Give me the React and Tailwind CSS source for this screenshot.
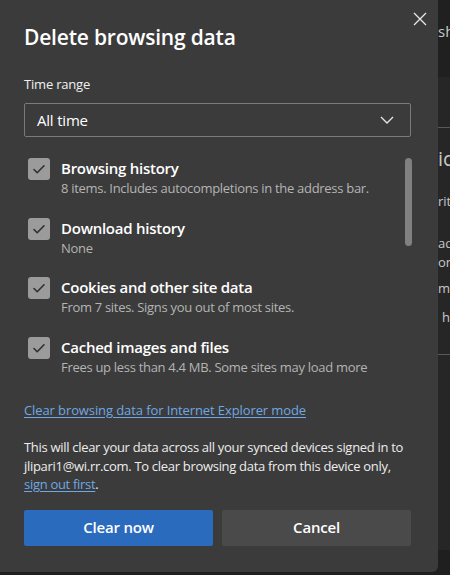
import React from "react";

const items = [
  { title: "Browsing history", desc: "8 items. Includes autocompletions in the address bar." },
  { title: "Download history", desc: "None" },
  { title: "Cookies and other site data", desc: "From 7 sites. Signs you out of most sites." },
  { title: "Cached images and files", desc: "Frees up less than 4.4 MB. Some sites may load more" },
];

const Check = () => (
  <div className="w-[22px] h-[22px] shrink-0 rounded-[3px] bg-[#9b9b9b] flex items-center justify-center">
    <svg width="14" height="14" viewBox="0 0 14 14" fill="none">
      <path d="M2 7.5l3.2 3.2L12 3.8" stroke="#2f2f2f" strokeWidth="1.6" strokeLinecap="round" strokeLinejoin="round" />
    </svg>
  </div>
);

export default function App() {
  return (
    <div className="w-[450px] h-[575px] bg-[#1f1f1f] flex overflow-hidden" style={{ fontFamily: '"Open Sans", "Noto Sans", sans-serif' }}>
      <div className="w-[438px] h-[572px] shrink-0 bg-[#3b3b3b] rounded-br-[6px] flex flex-col pl-6 pr-[27px] text-white">
        <div className="flex justify-end pt-[12px] -mr-[16px]">
          <svg width="14" height="14" viewBox="0 0 14 14" fill="none">
            <path d="M1 1l12 12M13 1L1 13" stroke="#e8e8e8" strokeWidth="1.3" />
          </svg>
        </div>
        <h1 className="text-[21px] font-semibold leading-[28px] -mt-[3px] tracking-[-0.2px]">Delete browsing data</h1>
        <div className="text-[13px] leading-[18px] mt-[24px] text-[#f0f0f0] tracking-[-0.2px]">Time range</div>
        <div className="mt-[10px] h-[34px] border border-[#7a7a7a] rounded-[2px] flex items-center justify-between pl-3 pr-[16px]">
          <span className="text-[15px] tracking-[-0.2px]">All time</span>
          <svg width="14" height="8" viewBox="0 0 14 8" fill="none">
            <path d="M1 1l6 6 6-6" stroke="#e8e8e8" strokeWidth="1.3" />
          </svg>
        </div>
        <div className="mt-[21px] h-[226px] flex">
          <div className="flex-1 flex flex-col gap-[20.5px] pl-1 overflow-hidden">
            {items.map((it) => (
              <div key={it.title} className="flex gap-[11px]">
                <Check />
                <div className="flex flex-col">
                  <span className="text-[15px] font-semibold leading-[22px] -mt-[1px] tracking-[-0.25px]">{it.title}</span>
                  <span className="text-[13px] leading-[18px] text-[#b4b4b4] whitespace-nowrap tracking-[-0.3px]">{it.desc}</span>
                </div>
              </div>
            ))}
          </div>
          <div className="w-[7px] h-[88px] rounded-full bg-[#808080] shrink-0 -mr-[1px]" />
        </div>
        <a className="mt-[17px] text-[13px] leading-[18px] text-[#6fa8e3] underline underline-offset-2 self-start tracking-[-0.1px]">
          Clear browsing data for Internet Explorer mode
        </a>
        <p className="mt-[19px] text-[13px] leading-[18.5px] text-[#ededed] tracking-[-0.3px] -mr-[4px]">
          This will clear your data across all your synced devices signed in to jlipari1@wi.rr.com. To clear browsing data from this device only,{" "}
          <a className="text-[#6fa8e3] underline underline-offset-2">sign out first</a>.
        </p>
        <div className="mt-[16px] flex gap-[9px]">
          <button className="flex-1 h-[36px] rounded-[2px] bg-[#2b6bbe] text-[15px] font-semibold tracking-[-0.2px]">Clear now</button>
          <button className="flex-1 h-[36px] rounded-[2px] bg-[#4a4a4a] text-[15px] font-semibold tracking-[-0.2px]">Cancel</button>
        </div>
      </div>
      <div className="flex-1 flex flex-col text-[#c8c8c8] text-[15px] whitespace-nowrap overflow-hidden">
        <div className="h-[77px] bg-[#202020] pt-[20px]">sh</div>
        <div className="h-[50px] bg-[#262626]" />
        <div className="h-px bg-[#5a5a5a]" />
        <div className="h-[226px] bg-[#262626] flex flex-col">
          <span className="text-[20px] mt-[16px]">ic</span>
          <span className="text-[13px] mt-[18px]">rit</span>
          <span className="text-[13px] mt-[22px]">ad:</span>
          <span className="text-[13px]">ona</span>
          <span className="text-[13px] mt-[6px]">mi</span>
          <span className="text-[13px] mt-[10px] pl-1">ha</span>
        </div>
        <div className="h-px bg-[#5a5a5a]" />
        <div className="h-[195px] bg-[#262626]" />
        <div className="flex-1 bg-[#1f1f1f]" />
      </div>
    </div>
  );
}
